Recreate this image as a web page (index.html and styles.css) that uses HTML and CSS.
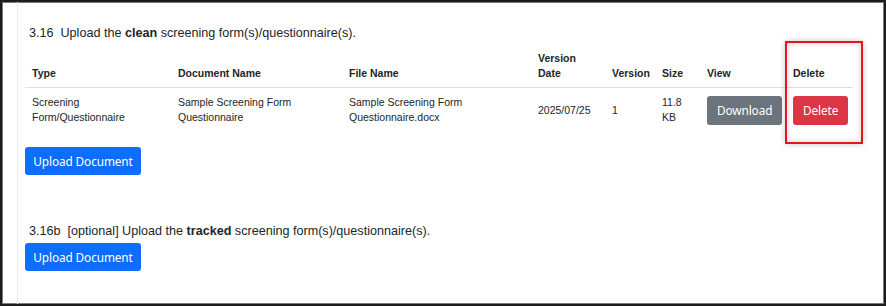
FILE: index.html
```html
<!DOCTYPE html>
<html lang="en">
<head>
    <meta charset="UTF-8">
    <meta name="viewport" content="width=device-width, initial-scale=1.0">
    <title>Screening Form Upload</title>
    <link rel="stylesheet" href="styles.css">
</head>
<body>
    <div class="frame">
        <div class="panel">
            <section class="upload-section">
                <p class="question">3.16&nbsp; Upload the <b>clean</b> screening form(s)/questionnaire(s).</p>

                <table class="doc-table">
                    <thead>
                        <tr>
                            <th class="col-type">Type</th>
                            <th class="col-doc">Document Name</th>
                            <th class="col-file">File Name</th>
                            <th class="col-date">Version<br>Date</th>
                            <th class="col-ver">Version</th>
                            <th class="col-size">Size</th>
                            <th class="col-view">View</th>
                            <th class="col-del">Delete</th>
                        </tr>
                    </thead>
                    <tbody>
                        <tr>
                            <td>Screening<br>Form/Questionnaire</td>
                            <td>Sample Screening Form<br>Questionnaire</td>
                            <td>Sample Screening Form<br>Questionnaire.docx</td>
                            <td>2025/07/25</td>
                            <td>1</td>
                            <td>11.8<br>KB</td>
                            <td><button class="btn btn-secondary">Download</button></td>
                            <td><button class="btn btn-danger">Delete</button></td>
                        </tr>
                    </tbody>
                </table>

                <button class="btn btn-primary btn-upload">Upload Document</button>
            </section>

            <section class="upload-section tracked">
                <p class="question">3.16b&nbsp; [optional] Upload the <b>tracked</b> screening form(s)/questionnaire(s).</p>
                <button class="btn btn-primary btn-upload">Upload Document</button>
            </section>
        </div>

        <!-- annotation box drawn over the Delete column -->
        <div class="highlight"></div>
    </div>
</body>
</html>
```

FILE: styles.css
```css
* {
    box-sizing: border-box;
}

html, body {
    margin: 0;
    padding: 0;
    background-color: #fff;
}

body {
    font-family: "Liberation Sans", Arial, sans-serif;
    color: #212529;
}

.frame {
    position: relative;
    width: 886px;
    height: 306px;
    border: 2px solid #1c1c1c;
    box-shadow: inset 0 0 0 1px #7a7a7a;
    overflow: hidden;
}

.panel {
    margin-left: 15px;
    height: 100%;
    border-left: 1px solid #ececec;
    padding-left: 7px;
    padding-top: 22px;
}

.question {
    margin: 0 0 2px 4px;
    font-size: 12.6px;
    line-height: 18px;
    color: #212529;
}

.question b {
    font-weight: bold;
}

.doc-table {
    border-collapse: collapse;
    table-layout: fixed;
    width: 828px;
    font-size: 10.5px;
    line-height: 15px;
}

.doc-table th {
    text-align: left;
    vertical-align: bottom;
    font-weight: bold;
    padding: 7px 7px 6px;
    border-bottom: 1px solid #dcdfe3;
}

.doc-table td {
    vertical-align: middle;
    padding: 7px 7px;
}

.col-type { width: 146px; }
.col-doc { width: 171px; }
.col-file { width: 189px; }
.col-date { width: 74px; }
.col-ver { width: 50px; }
.col-size { width: 45px; }
.col-view { width: 86px; }
.col-del { width: 67px; }

.btn {
    display: inline-flex;
    align-items: center;
    justify-content: center;
    height: 29px;
    padding: 0 10px;
    border: none;
    border-radius: 3px;
    color: #fff;
    font-family: "Noto Sans", "Open Sans", sans-serif;
    font-size: 11.8px;
    letter-spacing: -0.1px;
    cursor: pointer;
}

.btn-primary {
    background-color: #0d6efd;
}

.btn-secondary {
    background-color: #6c757d;
}

.btn-danger {
    background-color: #dc3545;
}

.btn-upload {
    height: 28px;
    width: 116px;
    padding: 0;
}

.upload-section {
    margin: 0;
}

.doc-table + .btn-upload {
    margin-top: 15px;
}

.tracked {
    margin-top: 47px;
}

.tracked .question {
    margin-bottom: 3px;
}

.highlight {
    position: absolute;
    left: 783px;
    top: 39px;
    width: 78px;
    height: 103px;
    border: 2px solid #e8141b;
    box-shadow: 0 0 6px rgba(0, 0, 0, 0.22), inset 0 0 6px rgba(0, 0, 0, 0.18);
    pointer-events: none;
}
```
